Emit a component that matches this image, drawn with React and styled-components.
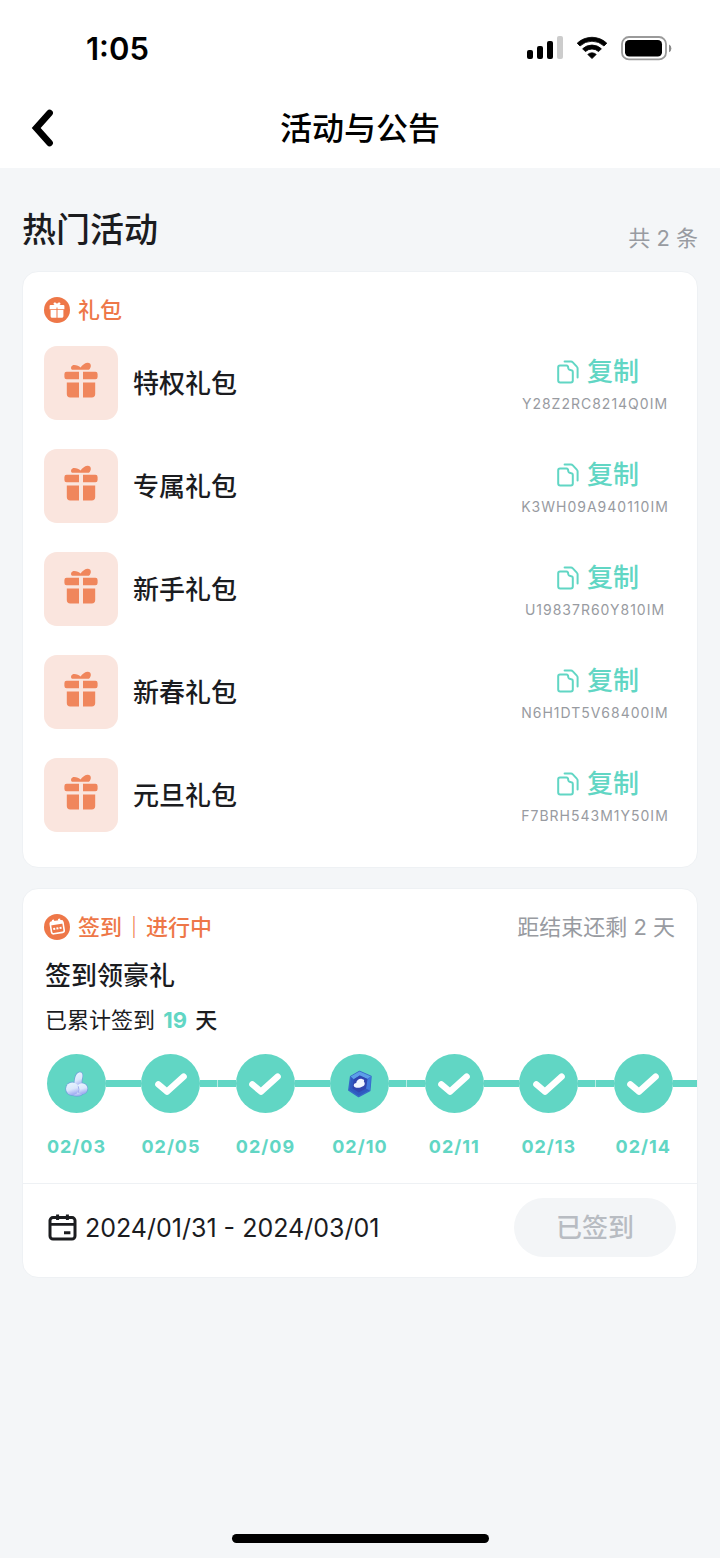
import React from "react";
import styled, { createGlobalStyle } from "styled-components";

const teal = "#61d6c4";
const orange = "#ee7748";
const ink = "#1b1c1f";
const muted = "#989ba1";
const line = "#eef1f4";

const GlobalStyle = createGlobalStyle`
  * { box-sizing: border-box; }
  body {
    margin: 0;
    background: #f4f6f8;
    color: ${ink};
    font-family: Inter, "Noto Sans CJK SC", sans-serif;
  }
  button { font-family: inherit; border: 0; background: none; padding: 0; cursor: pointer; }
  h1, h2, h3, p, ul, ol { margin: 0; padding: 0; }
  ul, ol { list-style: none; }
`;

const Screen = styled.div`
  min-height: 100vh;
  display: flex;
  flex-direction: column;
`;

const StatusBar = styled.div`
  display: flex;
  justify-content: space-between;
  align-items: center;
  height: 88px;
  padding: 8px 48px 0 86px;
  background: #fff;
  color: #000;
`;

const Clock = styled.span`
  padding-top: 2px;
  font-size: 31px;
  line-height: 40px;
  font-weight: 600;
`;

const StatusIcons = styled.div`
  display: flex;
  align-items: center;
  gap: 13px;
  svg { display: block; }
`;

const NavBar = styled.header`
  display: grid;
  grid-template-columns: 48px 1fr 48px;
  align-items: center;
  height: 80px;
  padding: 0 22px;
  background: #fff;
  color: #000;
`;

const BackButton = styled.button`
  display: flex;
  align-items: center;
  height: 48px;
  padding-left: 8px;
  color: #000;
`;

const NavTitle = styled.h1`
  padding-top: 2px;
  font-size: 32px;
  line-height: 48px;
  font-weight: 500;
  text-align: center;
`;

const Main = styled.main`
  display: flex;
  flex-direction: column;
  padding: 38px 22px 40px;
`;

const SectionHead = styled.div`
  display: flex;
  justify-content: space-between;
  align-items: flex-end;
  margin-bottom: 17px;
`;

const SectionTitle = styled.h2`
  font-size: 34px;
  line-height: 48px;
  font-weight: 500;
`;

const Muted = styled.span`
  font-size: 22px;
  line-height: 32px;
  color: ${muted};
`;

const Cards = styled.div`
  display: flex;
  flex-direction: column;
  gap: 20px;
`;

const Card = styled.section`
  overflow: hidden;
  padding-top: 22px;
  background: #fff;
  border: 1px solid ${line};
  border-radius: 16px;
`;

const CardHead = styled.div`
  display: flex;
  justify-content: space-between;
  align-items: center;
  padding: 0 22px 0 21px;
`;

const Tag = styled.div`
  display: flex;
  align-items: center;
  gap: 8px;
  color: ${orange};
  font-size: 22px;
  line-height: 32px;
  font-weight: 500;
`;

const TagText = styled.span`
  b { margin: 0 1px; font-weight: 700; }
`;

const GiftList = styled.ul`
  display: flex;
  flex-direction: column;
  gap: 29px;
  padding: 20px 21px 35px;
`;

const GiftRow = styled.li`
  display: flex;
  align-items: center;
  gap: 15px;
`;

const GiftTile = styled.span`
  display: flex;
  align-items: center;
  justify-content: center;
  width: 74px;
  height: 74px;
  padding-bottom: 6px;
  border-radius: 13px;
  background: #fae5de;
`;

const GiftName = styled.h3`
  flex: 1;
  padding-top: 2px;
  font-size: 26px;
  line-height: 36px;
  font-weight: 500;
`;

const CopyArea = styled.div`
  display: flex;
  flex-direction: column;
  align-items: center;
  gap: 4px;
  width: 162px;
  padding: 7px 0 1px;
`;

const CopyButton = styled.button`
  display: flex;
  align-items: center;
  gap: 8px;
  padding-left: 6px;
  color: ${teal};
  font-size: 26px;
  line-height: 32px;
  font-weight: 500;
`;

const Code = styled.span`
  font-size: 14px;
  line-height: 24px;
  letter-spacing: 1px;
  color: ${muted};
`;

const EventTitle = styled.h3`
  padding: 15px 22px 0;
  font-size: 26px;
  line-height: 36px;
  font-weight: 500;
`;

const Progress = styled.p`
  padding: 10px 22px 0;
  font-size: 22px;
  line-height: 32px;
  strong { margin: 0 2px; color: ${teal}; font-weight: 700; }
  b { font-weight: 500; }
`;

const Steps = styled.ol`
  display: grid;
  grid-template-columns: repeat(6, 14fr) 15fr;
  padding: 18px 0 24px 6px;
`;

const Step = styled.li`
  display: grid;
  grid-template-columns: 18px 59px 1fr;
  align-items: center;
  justify-items: center;
  row-gap: 22px;
`;

const Rail = styled.span`
  justify-self: stretch;
  height: 7px;
  background: ${(p) => (p.$hidden ? "transparent" : teal)};
  border-right: ${(p) => (p.$gap ? "1px solid #b9ece4" : "0")};
`;

const Dot = styled.span`
  display: flex;
  align-items: center;
  justify-content: center;
  width: 59px;
  height: 59px;
  border-radius: 50%;
  background: ${teal};
`;

const StepDate = styled.time`
  grid-column: 2;
  font-size: 18px;
  line-height: 24px;
  font-weight: 700;
  letter-spacing: 1px;
  color: ${teal};
  white-space: nowrap;
`;

const CardFoot = styled.div`
  display: flex;
  justify-content: space-between;
  align-items: center;
  padding: 14px 21px 20px 25px;
  border-top: 1px solid ${line};
`;

const Period = styled.span`
  display: flex;
  align-items: center;
  gap: 8px;
  font-size: 25px;
  line-height: 36px;
`;

const SignedButton = styled.button`
  width: 162px;
  height: 59px;
  border-radius: 30px;
  background: #f3f5f7;
  color: #b8bcc2;
  font-size: 26px;
  line-height: 36px;
  font-weight: 500;
  cursor: default;
`;

const HomeIndicator = styled.div`
  align-self: center;
  width: 257px;
  height: 9px;
  margin: auto 0 15px;
  border-radius: 5px;
  background: #000;
`;

const Signal = () => (
  <svg width="36" height="24" viewBox="0 0 36 24">
    <rect x="0" y="14" width="6" height="9" rx="2" />
    <rect x="10" y="10" width="6" height="13" rx="2" />
    <rect x="20" y="5" width="6" height="18" rx="2" />
    <rect x="30" y="0" width="6" height="23" rx="2" fill="#ccc" />
  </svg>
);

const Wifi = () => (
  <svg width="32" height="24" viewBox="0 0 32 24">
    <path d="M1.2 7.2 A21.5 21.5 0 0 1 30.8 7.2 L28 10 A17.4 17.4 0 0 0 4 10 Z" stroke="#000" strokeWidth="0.8" strokeLinejoin="round" />
    <path d="M6.6 12.8 A13.6 13.6 0 0 1 25.4 12.8 L22.6 15.6 A9.8 9.8 0 0 0 9.4 15.6 Z" stroke="#000" strokeWidth="0.8" strokeLinejoin="round" />
    <path d="M11.8 18.4 A6.4 6.4 0 0 1 20.2 18.4 L16 22.6 Z" stroke="#000" strokeWidth="0.8" strokeLinejoin="round" />
  </svg>
);

const Battery = () => (
  <svg width="51" height="25" viewBox="0 0 51 25">
    <rect x="1" y="1" width="44" height="22.4" rx="7" fill="none" stroke="#9a9a9a" strokeWidth="1.8" />
    <rect x="4" y="4" width="37" height="16.6" rx="4.2" />
    <path d="M48 8.6 q2.4 1 2.4 3.8 t-2.4 3.8z" fill="#8a8a8a" />
  </svg>
);

const BackIcon = () => (
  <svg width="26" height="40" viewBox="0 0 26 40" fill="none" stroke="#000" strokeWidth="6.6" strokeLinecap="round" strokeLinejoin="miter">
    <path d="M19.6 5 L6.2 20 L19.6 35" />
  </svg>
);

const GiftTagIcon = () => (
  <svg width="26" height="26" viewBox="0 0 26 26">
    <circle cx="13" cy="13" r="13" fill={orange} />
    <g fill="#fff">
      <path d="M13 8.4 C11.6 8.4 9.4 8.2 9.5 6.8 C9.6 5 12 5 13 7 C14 5 16.4 5 16.5 6.8 C16.6 8.2 14.4 8.4 13 8.4Z" />
      <path d="M6.6 8 H19.4 Q20.4 8 20.4 9 V12.2 H13.5 V10.4 H12.5 V12.2 H5.6 V9 Q5.6 8 6.6 8Z" />
      <path d="M6.6 13.1 H12.5 V20.8 H8.2 Q6.6 20.8 6.6 19.2Z M13.5 13.1 H19.4 V19.2 Q19.4 20.8 17.8 20.8 H13.5Z" />
    </g>
  </svg>
);

const CalendarTagIcon = () => (
  <svg width="26" height="26" viewBox="0 0 26 26">
    <circle cx="13" cy="13" r="13" fill={orange} />
    <g transform="rotate(-9 13 13)">
      <rect x="6.8" y="7.4" width="12.8" height="11.8" rx="2" fill="none" stroke="#fff" strokeWidth="1.6" />
      <path d="M6.8 7.4h12.8v3.2h-12.8z M9 5.2h2.2v3h-2.2z M15.2 5.2h2.2v3h-2.2z" fill="#fff" />
      <path d="M9 14.4h2M12.2 14.4h2M15.4 14.4h2" stroke="#fff" strokeWidth="2" />
    </g>
  </svg>
);

const GiftIcon = () => (
  <svg width="36" height="36" viewBox="0 0 36 36" fill="#f0865c">
    <path d="M8.6 7.4 C7.2 5.6 8.6 3 11.2 3 C13.8 3 16 4.2 17.6 5.4 C19.2 3.2 21.6 1.2 24.2 .8 C26.8 .6 28.2 2.2 27.8 4.4 C27.4 6.4 26.4 7.8 24.8 7.8 H10 Q9 7.8 8.6 7.4Z" />
    <path d="M3.6 9.8 H16 V17.2 H3.6 Q1.4 17.2 1.4 15 V12 Q1.4 9.8 3.6 9.8Z M20 9.8 H32.4 Q34.6 9.8 34.6 12 V15 Q34.6 17.2 32.4 17.2 H20Z" />
    <path d="M3.8 20.4 H16 V35.4 H7.2 Q3.8 35.4 3.8 32Z M20 20.4 H32.2 V32 Q32.2 35.4 28.8 35.4 H20Z" />
  </svg>
);

const CopyIcon = () => (
  <svg width="22" height="24" viewBox="0 0 22 24" fill="none" stroke={teal} strokeWidth="2" strokeLinecap="round" strokeLinejoin="round">
    <path d="M3 5.6 H9.6 Q10.8 5.6 11 6.8 L11.4 8.6 Q11.6 9.6 12.6 9.8 L14.4 10.2 Q15.8 10.4 15.8 11.8 V20.6 Q15.8 22.6 13.8 22.6 H3.2 Q1.2 22.6 1.2 20.6 V7.4 Q1.2 5.6 3 5.6Z" />
    <path d="M7.6 1.6 H14 Q15 1.6 15.8 2.4 L19.8 6.6 Q20.6 7.4 20.6 8.6 V17.6" />
  </svg>
);

const CheckIcon = () => (
  <svg width="34" height="26" viewBox="0 0 34 26" fill="none" stroke="#fff" strokeWidth="6.4" strokeLinecap="round" strokeLinejoin="round">
    <path d="M4.4 13.4 L13 20.6 L29.6 5.6" />
  </svg>
);

const ThumbIcon = () => (
  <svg width="26" height="28" viewBox="0 0 26 28">
    <defs>
      <linearGradient id="thumb" x1="0" y1="0" x2="0.3" y2="1">
        <stop offset="0" stopColor="#e8f7ff" />
        <stop offset="0.6" stopColor="#dbe7fc" />
        <stop offset="1" stopColor="#a4b0f2" />
      </linearGradient>
    </defs>
    <g stroke="#6fa9d8" strokeWidth="1.6" fill="#6fa9d8">
      <ellipse cx="8.4" cy="18.8" rx="6.4" ry="6.4" />
      <ellipse cx="18" cy="18.6" rx="5.4" ry="5.4" />
      <path d="M10.4 15 C10.4 9 11.6 3 15.4 2.4 C18.6 2 19 5.6 18 8.8 C17.4 11 17.6 13 18 15Z" />
      <ellipse cx="13" cy="22.6" rx="6" ry="3.4" />
    </g>
    <g fill="url(#thumb)">
      <ellipse cx="13" cy="22.6" rx="6" ry="3.4" />
      <path d="M10.4 17 C10.4 9 11.6 3 15.4 2.4 C18.6 2 19 5.6 18 8.8 C17.4 11 17.6 13 18 17Z" />
      <ellipse cx="18" cy="18.6" rx="5.4" ry="5.4" />
      <ellipse cx="8.4" cy="18.8" rx="6.4" ry="6.4" />
    </g>
    <path d="M14.4 16.6 Q15.8 19.6 14.2 22.8" fill="none" stroke="#a3b2f0" strokeWidth="1" strokeLinecap="round" />
  </svg>
);

const BadgeIcon = () => (
  <svg width="26" height="28" viewBox="0 0 26 28">
    <path d="M12.6 1.4 L24 6.4 L22.8 20.6 L11.6 26.6 L1.8 20.2 L3.6 6.6Z" fill="#2f59c0" stroke="#3668c8" strokeWidth="1.4" strokeLinejoin="round" />
    <path d="M12.6 1.4 L24 6.4 L20.4 9 L12.8 5.4 L6.8 9.2 L3.6 6.6Z" fill="#5c9fe8" />
    <path d="M24 6.4 L22.8 20.6 L19 18.4 L20.4 9Z" fill="#3f78dc" />
    <path d="M12.8 5.4 L20.4 9 L19 18.6 L11.8 22.6 L5.4 18.4 L6.8 9.2Z" fill="#3045b0" />
    <path d="M8 17.2 C5.8 16.2 6.8 13 9.2 13 C9.6 9.8 13 7.8 15.4 9.2 C17 9 17.6 10.6 16.8 11.8 C18.6 13 17.6 16.2 15.4 16.4 C13.4 18 10 18.2 8 17.2Z" fill="#f1f5ff" />
  </svg>
);

const CalendarIcon = () => (
  <svg width="29" height="27" viewBox="0 0 29 27" fill="none" stroke={ink} strokeWidth="3">
    <rect x="2" y="3.6" width="25" height="21.4" rx="3" />
    <path d="M2 10.4 H27" strokeWidth="2.6" />
    <path d="M9.6 .6 V6 M19.4 .6 V6" />
    <path d="M16 18.8 H22.4" />
  </svg>
);

const gifts = [
  ["特权礼包", "Y28Z2RC8214Q0IM"],
  ["专属礼包", "K3WH09A940110IM"],
  ["新手礼包", "U19837R60Y810IM"],
  ["新春礼包", "N6H1DT5V68400IM"],
  ["元旦礼包", "F7BRH543M1Y50IM"],
];

const steps = [
  ["02/03", ThumbIcon],
  ["02/05", CheckIcon],
  ["02/09", CheckIcon],
  ["02/10", BadgeIcon],
  ["02/11", CheckIcon],
  ["02/13", CheckIcon],
  ["02/14", CheckIcon],
];

export default function App() {
  return (
    <Screen>
      <GlobalStyle />
      <StatusBar>
        <Clock>1:05</Clock>
        <StatusIcons>
          <Signal />
          <Wifi />
          <Battery />
        </StatusIcons>
      </StatusBar>
      <NavBar>
        <BackButton aria-label="返回">
          <BackIcon />
        </BackButton>
        <NavTitle>活动与公告</NavTitle>
      </NavBar>
      <Main>
        <SectionHead>
          <SectionTitle>热门活动</SectionTitle>
          <Muted>共 2 条</Muted>
        </SectionHead>
        <Cards>
          <Card>
            <CardHead>
              <Tag>
                <GiftTagIcon />
                <TagText>礼包</TagText>
              </Tag>
            </CardHead>
            <GiftList>
              {gifts.map(([name, code]) => (
                <GiftRow key={code}>
                  <GiftTile>
                    <GiftIcon />
                  </GiftTile>
                  <GiftName>{name}</GiftName>
                  <CopyArea>
                    <CopyButton>
                      <CopyIcon />
                      复制
                    </CopyButton>
                    <Code>{code}</Code>
                  </CopyArea>
                </GiftRow>
              ))}
            </GiftList>
          </Card>
          <Card>
            <CardHead>
              <Tag>
                <CalendarTagIcon />
                <TagText>
                  签到<b>｜</b>进行中
                </TagText>
              </Tag>
              <Muted>距结束还剩 2 天</Muted>
            </CardHead>
            <EventTitle>签到领豪礼</EventTitle>
            <Progress>
              已累计签到 <strong>19</strong> <b>天</b>
            </Progress>
            <Steps>
              {steps.map(([date, Icon], i) => (
                <Step key={date}>
                  <Rail $hidden={i === 0} />
                  <Dot>
                    <Icon />
                  </Dot>
                  <Rail $gap={i % 2 === 1} />
                  <StepDate>{date}</StepDate>
                </Step>
              ))}
            </Steps>
            <CardFoot>
              <Period>
                <CalendarIcon />
                2024/01/31 - 2024/03/01
              </Period>
              <SignedButton disabled>已签到</SignedButton>
            </CardFoot>
          </Card>
        </Cards>
      </Main>
      <HomeIndicator />
    </Screen>
  );
}
